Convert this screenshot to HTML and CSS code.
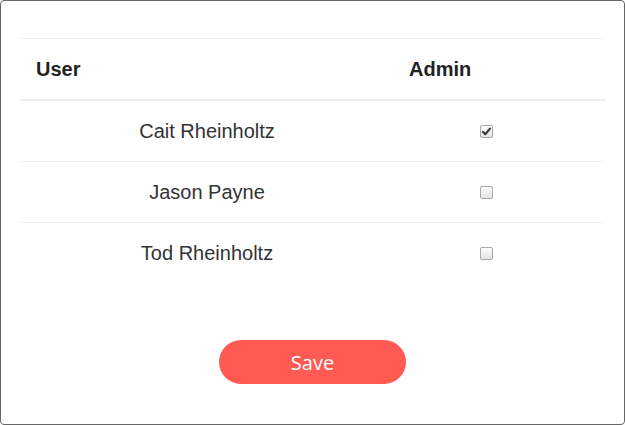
FILE: index.html
```html
<!DOCTYPE html>
<html>
<head>
<meta charset="utf-8">
<link rel="stylesheet" href="styles.css">
</head>
<body>
<div class="dialog">
  <div class="table">
    <div class="row head">
      <div class="cell th user">User</div>
      <div class="cell th admin">Admin</div>
      <div class="cell"></div>
    </div>
    <div class="row">
      <div class="cell name">Cait Rheinholtz</div>
      <div class="cell check"><span class="box checked"><svg width="11" height="11" viewBox="0 0 11 11"><path d="M2 6 L4.3 8.3 L9 2.6" fill="none" stroke="#3a3a3a" stroke-width="2.2" stroke-linecap="round" stroke-linejoin="round"/></svg></span></div>
      <div class="cell"></div>
    </div>
    <div class="row">
      <div class="cell name">Jason Payne</div>
      <div class="cell check"><span class="box"></span></div>
      <div class="cell"></div>
    </div>
    <div class="row last">
      <div class="cell name">Tod Rheinholtz</div>
      <div class="cell check"><span class="box"></span></div>
      <div class="cell"></div>
    </div>
  </div>
  <div class="actions">
    <button class="save">Save</button>
  </div>
</div>
</body>
</html>
```
FILE: styles.css
```css
html, body {
  margin: 0;
  padding: 0;
  background: #fff;
}
.dialog {
  box-sizing: border-box;
  width: 625px;
  height: 425px;
  border: 1px solid #666;
  border-radius: 4px;
  padding: 37px 19px 0 19px;
  font-family: "Liberation Sans", Arial, sans-serif;
  color: #333;
}
.table {
  border-top: 1px solid #eee;
}
.row {
  display: grid;
  grid-template-columns: 374px 184px 1fr;
  height: 60px;
  border-bottom: 1px solid #eee;
  align-items: center;
}
.row.head {
  border-bottom: 2px solid #eee;
}
.row.last {
  border-bottom: none;
}
.th {
  font-weight: bold;
  font-size: 20px;
  color: #222;
}
.user { padding-left: 16px; }
.admin { padding-left: 15px; }
.name {
  text-align: center;
  font-size: 20px;
  line-height: 22px;
}
.check {
  display: flex;
  justify-content: center;
}
.box {
  box-sizing: border-box;
  width: 13px;
  height: 13px;
  border: 1px solid #a8a8a8;
  border-radius: 2px;
  background: linear-gradient(#fcfcfc, #e4e4e4);
  display: flex;
  align-items: center;
  justify-content: center;
}
.box svg { display: block; }
.actions {
  display: flex;
  justify-content: center;
  margin-top: 57px;
}
.save {
  width: 187px;
  height: 44px;
  border: none;
  border-radius: 22px;
  background: #ff5a54;
  color: #fff;
  font-family: "Open Sans", sans-serif;
  font-size: 20px;
  padding: 0;
}
```
